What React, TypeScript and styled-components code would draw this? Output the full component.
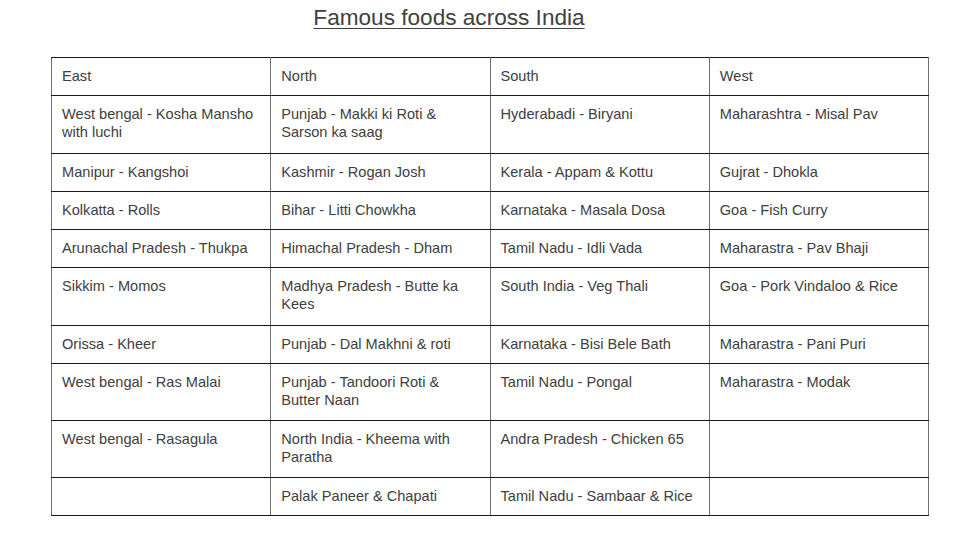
import React from 'react';
import styled, { createGlobalStyle } from 'styled-components';

const GlobalStyle = createGlobalStyle`
  body {
    margin: 0;
    background: #ffffff;
    font-family: 'Liberation Sans', Arial, sans-serif;
  }
`;

const Page = styled.div`
  width: 960px;
  height: 540px;
  display: flex;
  flex-direction: column;
  align-items: flex-start;
`;

const Title = styled.h1`
  margin: 4px 0 0 0;
  width: 898px;
  text-align: center;
  font-size: 22.6px;
  font-weight: normal;
  line-height: 27px;
  color: #404040;
  text-decoration: underline;
  text-decoration-thickness: 1px;
  text-underline-offset: 3px;
`;

const Table = styled.table`
  margin: 26px 0 0 51px;
  width: 878px;
  border-collapse: collapse;
  table-layout: fixed;
`;

const Row = styled.tr<{ $h: number }>`
  height: ${({ $h }) => $h}px;
`;

const Cell = styled.td`
  vertical-align: top;
  padding: 9px 10px 9px 10px;
  font-size: 14.6px;
  line-height: 18px;
  color: #404040;
  border-top: 1px solid #1a1a1a;
  border-bottom: 1px solid #1a1a1a;
  border-left: 1px solid #707070;
  border-right: 1px solid #707070;
`;

const rows: { cells: string[]; h: number }[] = [
  { cells: ['East', 'North', 'South', 'West'], h: 38 },
  { cells: ['West bengal - Kosha Mansho with luchi', 'Punjab - Makki ki Roti & Sarson ka saag', 'Hyderabadi - Biryani', 'Maharashtra - Misal Pav'], h: 58 },
  { cells: ['Manipur - Kangshoi', 'Kashmir - Rogan Josh', 'Kerala - Appam & Kottu', 'Gujrat - Dhokla'], h: 38 },
  { cells: ['Kolkatta - Rolls', 'Bihar - Litti Chowkha', 'Karnataka - Masala Dosa', 'Goa - Fish Curry'], h: 38 },
  { cells: ['Arunachal Pradesh - Thukpa', 'Himachal Pradesh - Dham', 'Tamil Nadu - Idli Vada', 'Maharastra - Pav Bhaji'], h: 38 },
  { cells: ['Sikkim - Momos', 'Madhya Pradesh - Butte ka Kees', 'South India - Veg Thali', 'Goa - Pork Vindaloo & Rice'], h: 58 },
  { cells: ['Orissa - Kheer', 'Punjab - Dal Makhni & roti', 'Karnataka - Bisi Bele Bath', 'Maharastra - Pani Puri'], h: 38 },
  { cells: ['West bengal - Ras Malai', 'Punjab - Tandoori Roti & Butter Naan', 'Tamil Nadu - Pongal', 'Maharastra - Modak'], h: 57 },
  { cells: ['West bengal - Rasagula', 'North India - Kheema with Paratha', 'Andra Pradesh - Chicken 65', ''], h: 57 },
  { cells: ['', 'Palak Paneer & Chapati', 'Tamil Nadu - Sambaar & Rice', ''], h: 38 },
];

const App = () => (
  <>
    <GlobalStyle />
    <Page>
      <Title>Famous foods across India</Title>
      <Table>
        <tbody>
          {rows.map((row, i) => (
            <Row key={i} $h={row.h}>
              {row.cells.map((c, j) => (
                <Cell key={j}>{c}</Cell>
              ))}
            </Row>
          ))}
        </tbody>
      </Table>
    </Page>
  </>
);

export default App;
